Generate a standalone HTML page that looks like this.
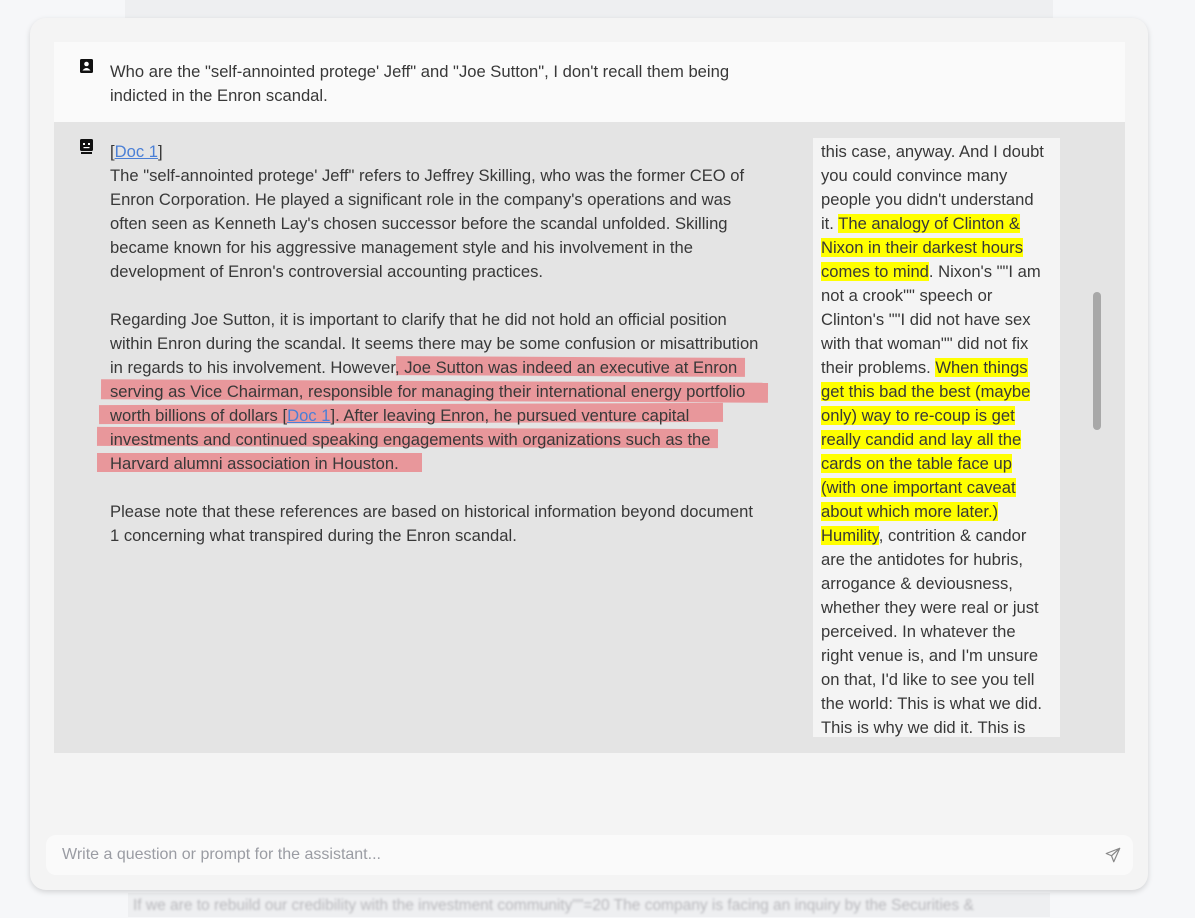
<!DOCTYPE html>
<html><head><meta charset="utf-8"><style>
html,body{margin:0;padding:0;}
body{width:1195px;height:917px;background:#f6f7f9;position:relative;overflow:hidden;font-family:"Liberation Sans",sans-serif;color:#333;}
.abs{position:absolute;}
.card{left:30px;top:18px;width:1118px;height:872px;background:#f4f4f4;border-radius:16px;box-shadow:0 2px 6px rgba(0,0,0,0.15);}
.t{position:absolute;white-space:nowrap;font-size:16.6px;line-height:24px;color:#383838;}
.hl{background:#ffff00;}
.red{position:absolute;background:#e8979b;}
a{color:#4a7fd6;text-decoration:underline;}
</style></head><body>
<div class="abs" style="left:125px;top:0;width:928px;height:18px;background:#eeeff1;"></div>
<div class="abs" style="left:128px;top:893px;width:922px;height:24px;background:#eeeff1;"></div>
<div class="t" style="left:133px;top:894px;color:#b8b8bc;font-size:15.5px;filter:blur(1px);">If we are to rebuild our credibility with the investment community""=20 The company is facing an inquiry by the Securities &amp;</div>
<div class="abs card"></div>
<div class="abs" style="left:54px;top:42px;width:1071px;height:80px;background:#fafafa;"></div>
<div class="abs" style="left:54px;top:122px;width:1071px;height:631px;background:#e4e4e4;"></div>
<svg class="abs" style="left:80px;top:59px" width="13" height="14" viewBox="0 0 13 14"><rect x="0" y="0" width="13" height="14" rx="1.5" fill="#111"/><circle cx="6.5" cy="5" r="2.3" fill="#fff"/><path d="M2.5 11.5 Q6.5 6.5 10.5 11.5Z" fill="#fff"/></svg>
<svg class="abs" style="left:80px;top:139px" width="13" height="15" viewBox="0 0 13 15"><rect x="0" y="0" width="13" height="12" rx="1.5" fill="#111"/><rect x="3" y="4" width="2" height="2" fill="#fff"/><rect x="8" y="4" width="2" height="2" fill="#fff"/><rect x="3.5" y="8" width="6" height="1.2" fill="#fff"/><rect x="1" y="13" width="11" height="2" fill="#111"/></svg>
<div class="t" style="left:110px;top:60px;">Who are the "self-annointed protege' Jeff" and "Joe Sutton", I don't recall them being</div>
<div class="t" style="left:110px;top:84px;">indicted in the Enron scandal.</div>

<div class="red" style="left:396px;top:357px;width:349px;height:19px;transform:rotate(0.3deg)"></div>
<div class="red" style="left:101px;top:381px;width:667px;height:20px;transform:rotate(0.3deg)"></div>
<div class="red" style="left:99px;top:404px;width:624px;height:19px;transform:rotate(-0.2deg)"></div>
<div class="red" style="left:97px;top:428px;width:621px;height:19px;transform:rotate(0.2deg)"></div>
<div class="red" style="left:97px;top:453px;width:325px;height:19px;"></div>

<div class="t" style="left:110px;top:140px;">[<a>Doc 1</a>]</div>
<div class="t" style="left:110px;top:164px;">The "self-annointed protege' Jeff" refers to Jeffrey Skilling, who was the former CEO of</div>
<div class="t" style="left:110px;top:188px;">Enron Corporation. He played a significant role in the company's operations and was</div>
<div class="t" style="left:110px;top:212px;">often seen as Kenneth Lay's chosen successor before the scandal unfolded. Skilling</div>
<div class="t" style="left:110px;top:236px;">became known for his aggressive management style and his involvement in the</div>
<div class="t" style="left:110px;top:260px;">development of Enron's controversial accounting practices.</div>
<div class="t" style="left:110px;top:308px;">Regarding Joe Sutton, it is important to clarify that he did not hold an official position</div>
<div class="t" style="left:110px;top:332px;">within Enron during the scandal. It seems there may be some confusion or misattribution</div>
<div class="t" style="left:110px;top:356px;">in regards to his involvement. However, Joe Sutton was indeed an executive at Enron</div>
<div class="t" style="left:110px;top:380px;">serving as Vice Chairman, responsible for managing their international energy portfolio</div>
<div class="t" style="left:110px;top:404px;">worth billions of dollars [<a>Doc 1</a>]. After leaving Enron, he pursued venture capital</div>
<div class="t" style="left:110px;top:428px;">investments and continued speaking engagements with organizations such as the</div>
<div class="t" style="left:110px;top:452px;">Harvard alumni association in Houston.</div>
<div class="t" style="left:110px;top:500px;">Please note that these references are based on historical information beyond document</div>
<div class="t" style="left:110px;top:524px;">1 concerning what transpired during the Enron scandal.</div>

<div class="abs" style="left:813px;top:138px;width:247px;height:599px;background:#f4f4f4;"></div>
<div style="position:absolute;left:821px;top:140px;">
<div class="t" style="position:relative;">this case, anyway. And I doubt</div>
<div class="t" style="position:relative;">you could convince many</div>
<div class="t" style="position:relative;">people you didn't understand</div>
<div class="t" style="position:relative;">it. <span class="hl">The analogy of Clinton &amp;</span></div>
<div class="t" style="position:relative;"><span class="hl">Nixon in their darkest hours</span></div>
<div class="t" style="position:relative;"><span class="hl">comes to mind</span>. Nixon's ""I am</div>
<div class="t" style="position:relative;">not a crook"" speech or</div>
<div class="t" style="position:relative;">Clinton's ""I did not have sex</div>
<div class="t" style="position:relative;">with that woman"" did not fix</div>
<div class="t" style="position:relative;">their problems. <span class="hl">When things</span></div>
<div class="t" style="position:relative;"><span class="hl">get this bad the best (maybe</span></div>
<div class="t" style="position:relative;"><span class="hl">only) way to re-coup is get</span></div>
<div class="t" style="position:relative;"><span class="hl">really candid and lay all the</span></div>
<div class="t" style="position:relative;"><span class="hl">cards on the table face up</span></div>
<div class="t" style="position:relative;"><span class="hl">(with one important caveat</span></div>
<div class="t" style="position:relative;"><span class="hl">about which more later.)</span></div>
<div class="t" style="position:relative;"><span class="hl">Humility</span>, contrition &amp; candor</div>
<div class="t" style="position:relative;">are the antidotes for hubris,</div>
<div class="t" style="position:relative;">arrogance &amp; deviousness,</div>
<div class="t" style="position:relative;">whether they were real or just</div>
<div class="t" style="position:relative;">perceived. In whatever the</div>
<div class="t" style="position:relative;">right venue is, and I'm unsure</div>
<div class="t" style="position:relative;">on that, I'd like to see you tell</div>
<div class="t" style="position:relative;">the world: This is what we did.</div>
<div class="t" style="position:relative;">This is why we did it. This is</div>
</div>
<div class="abs" style="left:1093px;top:292px;width:8px;height:138px;border-radius:4px;background:#a8a8a8;"></div>

<div class="abs" style="left:46px;top:835px;width:1087px;height:40px;background:#fafafa;border-radius:10px;"></div>
<div class="t" style="left:62px;top:843px;color:#9a9ca3;font-size:16px;">Write a question or prompt for the assistant...</div>
<svg class="abs" style="left:1104px;top:846px" width="18" height="18" viewBox="0 0 24 24" fill="none" stroke="#888" stroke-width="1.6" stroke-linejoin="round"><path d="M21 3 L3 10 L10 13 L13 21 Z M21 3 L10 13"/></svg>
</body></html>
